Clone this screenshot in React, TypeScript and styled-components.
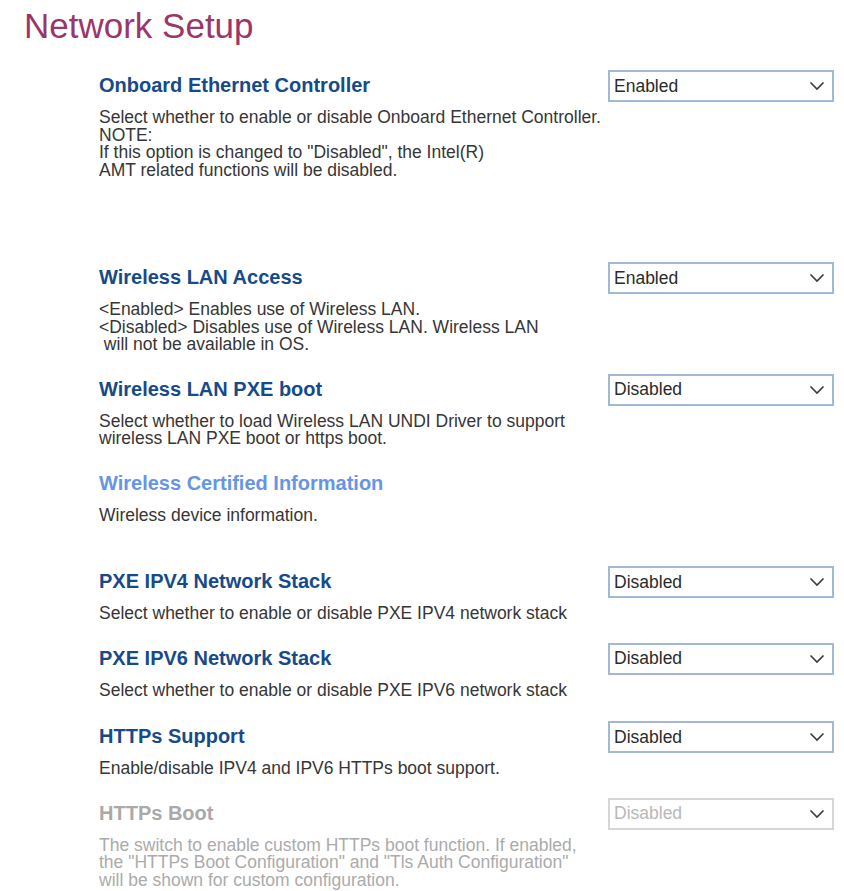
import * as React from 'react';
import styled, { createGlobalStyle } from 'styled-components';

const GlobalStyle = createGlobalStyle`
    html, body {
        margin: 0;
        padding: 0;
        background: #ffffff;
        font-family: "Liberation Sans", Arial, sans-serif;
    }
`;

const Page = styled.div`
    width: 844px;
    min-height: 891px;
    box-sizing: border-box;
`;

const Title = styled.h1`
    margin: 0;
    padding: 6px 0 0 24px;
    font-size: 35px;
    line-height: 40px;
    font-weight: normal;
    color: #9a366a;
`;

const List = styled.div`
    padding: 24px 0 0 99px;
`;

const Item = styled.div<{ $gap: number }>`
    display: grid;
    grid-template-columns: 509px 226px;
    grid-template-rows: 32px auto;
    padding-bottom: ${p => p.$gap}px;
`;

const Heading = styled.div<{ $tone: 'normal' | 'link' | 'disabled' }>`
    grid-column: 1;
    grid-row: 1;
    font-size: 20px;
    line-height: 30px;
    font-weight: bold;
    color: ${p => p.$tone === 'link' ? '#6595e4' : p.$tone === 'disabled' ? '#a9a9a9' : '#174a88'};
`;

const Desc = styled.div<{ $disabled?: boolean }>`
    grid-column: 1;
    grid-row: 2;
    margin-top: 7px;
    font-size: 17.5px;
    line-height: 17.5px;
    white-space: pre;
    color: ${p => p.$disabled ? '#ababab' : '#363636'};
`;

const SelectBox = styled.div<{ $disabled?: boolean }>`
    grid-column: 2;
    grid-row: 1;
    box-sizing: border-box;
    height: 32px;
    display: flex;
    align-items: center;
    justify-content: space-between;
    padding: 0 7px 0 4px;
    border: 2px solid ${p => p.$disabled ? '#d6d6d6' : '#a2b9d6'};
    background: #ffffff;
    font-size: 17.5px;
    color: ${p => p.$disabled ? '#b8b8b8' : '#2b2b2b'};
`;

const Chevron = () => (
    <svg width="16" height="10" viewBox="0 0 16 10">
        <path d="M1.5 1.5 L8 8 L14.5 1.5" fill="none" stroke="#3a3a3a" strokeWidth="1.6" />
    </svg>
);

interface Setting {
    title: string;
    lines: string[];
    value?: string;
    tone: 'normal' | 'link' | 'disabled';
    gap: number;
}

const settings: Setting[] = [
    {
        title: 'Onboard Ethernet Controller',
        lines: [
            'Select whether to enable or disable Onboard Ethernet Controller.',
            'NOTE:',
            'If this option is changed to "Disabled", the Intel(R)',
            'AMT related functions will be disabled.',
        ],
        value: 'Enabled',
        tone: 'normal',
        gap: 83,
    },
    {
        title: 'Wireless LAN Access',
        lines: [
            '<Enabled> Enables use of Wireless LAN.',
            '<Disabled> Disables use of Wireless LAN. Wireless LAN',
            ' will not be available in OS.',
        ],
        value: 'Enabled',
        tone: 'normal',
        gap: 20,
    },
    {
        title: 'Wireless LAN PXE boot',
        lines: [
            'Select whether to load Wireless LAN UNDI Driver to support',
            'wireless LAN PXE boot or https boot.',
        ],
        value: 'Disabled',
        tone: 'normal',
        gap: 20,
    },
    {
        title: 'Wireless Certified Information',
        lines: ['Wireless device information.'],
        tone: 'link',
        gap: 42,
    },
    {
        title: 'PXE IPV4 Network Stack',
        lines: ['Select whether to enable or disable PXE IPV4 network stack'],
        value: 'Disabled',
        tone: 'normal',
        gap: 20,
    },
    {
        title: 'PXE IPV6 Network Stack',
        lines: ['Select whether to enable or disable PXE IPV6 network stack'],
        value: 'Disabled',
        tone: 'normal',
        gap: 22,
    },
    {
        title: 'HTTPs Support',
        lines: ['Enable/disable IPV4 and IPV6 HTTPs boot support.'],
        value: 'Disabled',
        tone: 'normal',
        gap: 20,
    },
    {
        title: 'HTTPs Boot',
        lines: [
            'The switch to enable custom HTTPs boot function. If enabled,',
            'the "HTTPs Boot Configuration" and "Tls Auth Configuration"',
            'will be shown for custom configuration.',
        ],
        value: 'Disabled',
        tone: 'disabled',
        gap: 0,
    },
];

export default function App() {
    return <Page>
        <GlobalStyle />
        <Title>Network Setup</Title>
        <List>
            {settings.map(s =>
                <Item key={s.title} $gap={s.gap}>
                    <Heading $tone={s.tone}>{s.title}</Heading>
                    {s.value &&
                        <SelectBox $disabled={s.tone === 'disabled'}>
                            <span>{s.value}</span>
                            <Chevron />
                        </SelectBox>
                    }
                    <Desc $disabled={s.tone === 'disabled'}>{s.lines.join('\n')}</Desc>
                </Item>
            )}
        </List>
    </Page>;
}
